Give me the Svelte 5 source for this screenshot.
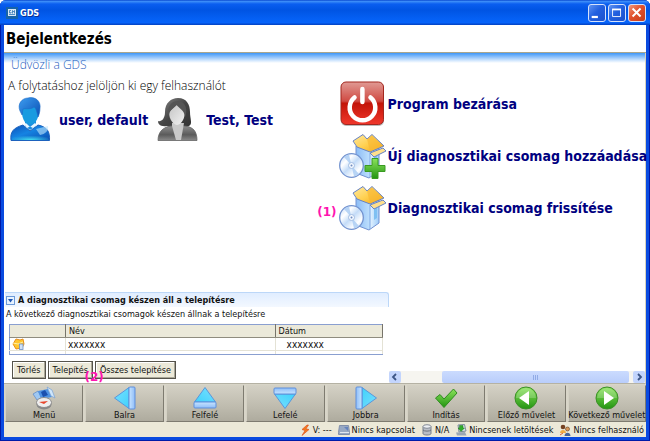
<script>
  const users = [
    { name: 'user, default', kind: 'man' },
    { name: 'Test, Test', kind: 'woman' },
  ];
  const actions = [
    { label: 'Program bezárása', kind: 'power' },
    { label: 'Új diagnosztikai csomag hozzáadása', kind: 'add' },
    { label: 'Diagnosztikai csomag frissítése', kind: 'update', mark: '(1)' },
  ];
  const tools = [
    { label: 'Menü', icon: 'menu' },
    { label: 'Balra', icon: 'arrow', turn: 0 },
    { label: 'Felfelé', icon: 'arrow', turn: 90 },
    { label: 'Lefelé', icon: 'arrow', turn: 270 },
    { label: 'Jobbra', icon: 'arrow', turn: 180 },
    { label: 'Indítás', icon: 'check' },
    { label: 'Előző művelet', icon: 'round', turn: 0 },
    { label: 'Következő művelet', icon: 'round', turn: 180 },
  ];
  const status = [
    { label: 'V: ---', icon: 'bolt' },
    { label: 'Nincs kapcsolat', icon: 'drive' },
    { label: 'N/A', icon: 'db' },
    { label: 'Nincsenek letöltések', icon: 'download' },
    { label: 'Nincs felhasználó', icon: 'people' },
  ];
</script>

<svg class="defs" aria-hidden="true">
  <defs>
    <linearGradient id="blueHair" x1="0" y1="0" x2="1" y2="1"><stop offset="0" stop-color="#3d9df0" /><stop offset="1" stop-color="#0a4fb4" /></linearGradient>
    <linearGradient id="blueBody" x1="0" y1="0" x2="1" y2="1"><stop offset="0" stop-color="#0d4fb8" /><stop offset=".45" stop-color="#1583e2" /><stop offset="1" stop-color="#0b4db0" /></linearGradient>
    <radialGradient id="cyanGlow" cx=".5" cy="1" r=".6"><stop offset="0" stop-color="#43dff0" /><stop offset="1" stop-color="#43dff0" stop-opacity="0" /></radialGradient>
    <linearGradient id="greyBody" x1="0" y1="0" x2="0" y2="1"><stop offset="0" stop-color="#8d8d8d" /><stop offset=".6" stop-color="#5b5b5b" /><stop offset="1" stop-color="#8a8a8a" /></linearGradient>
    <linearGradient id="greyHair" x1="0" y1="0" x2="1" y2="1"><stop offset="0" stop-color="#8a8a8a" /><stop offset=".5" stop-color="#454545" /><stop offset="1" stop-color="#333" /></linearGradient>
    <linearGradient id="face" x1="0" y1="0" x2="1" y2="1"><stop offset="0" stop-color="#c4c4c4" /><stop offset="1" stop-color="#f2f2f2" /></linearGradient>
    <linearGradient id="red" x1="0" y1="0" x2="0" y2="1"><stop offset="0" stop-color="#e09a94" /><stop offset=".45" stop-color="#d04a42" /><stop offset=".5" stop-color="#c31408" /><stop offset="1" stop-color="#f0382c" /></linearGradient>
    <linearGradient id="gold" x1="0" y1="0" x2="1" y2="1"><stop offset="0" stop-color="#ffe9a0" /><stop offset=".5" stop-color="#ffd050" /><stop offset="1" stop-color="#f3a412" /></linearGradient>
    <linearGradient id="box" x1="0" y1="0" x2="1" y2="0"><stop offset="0" stop-color="#8bbcf6" /><stop offset=".6" stop-color="#bfe0fd" /><stop offset=".61" stop-color="#e6f4ff" /><stop offset="1" stop-color="#9ccbf9" /></linearGradient>
    <linearGradient id="disc" x1="0" y1="0" x2="1" y2="1"><stop offset="0" stop-color="#b8d4f8" /><stop offset=".3" stop-color="#fff" /><stop offset=".5" stop-color="#c4dcf8" /><stop offset=".75" stop-color="#fff" /><stop offset="1" stop-color="#a9c8f2" /></linearGradient>
    <linearGradient id="green" x1="0" y1="0" x2="0" y2="1"><stop offset="0" stop-color="#8be35c" /><stop offset="1" stop-color="#239411" /></linearGradient>
    <linearGradient id="cyan" x1="0" y1="0" x2="1" y2="1"><stop offset="0" stop-color="#7adfff" /><stop offset="1" stop-color="#3fd2fb" /></linearGradient>
    <linearGradient id="bar" x1="0" y1="0" x2="1" y2="0"><stop offset="0" stop-color="#c7e4ff" /><stop offset="1" stop-color="#8fbdf8" /></linearGradient>
  </defs>
</svg>

{#snippet portrait(kind)}
  <svg class="portrait" viewBox="0 0 41 45" aria-hidden="true">
    {#if kind === 'man'}
      <path d="M1 43.500C0 35 3 31 13 28L20 34 28 28C37 30 40 34 39.500 43.500Z" fill="url(#blueBody)" stroke="#1d62bd" />
      <path d="M2 43C2 38 8 34 20 36 32 34 38 38 39 43Z" fill="url(#cyanGlow)" />
      <path d="M26 32L38 29C39 34 35 37 30 38Z" fill="#bfe6fb" opacity=".6" />
      <path d="M15 23V29L20 33 26 29V23Z" fill="#1c8de0" />
      <path d="M14 27L16 26 20 30 25 26 27 28 23 31 20 29.500 17 31Z" fill="#e7f7ff" />
      <path d="M12 10C11 20 14 27 20 27.500 26 27 30 20 29 10Z" fill="#189be0" />
      <path d="M10 14C7 7 12 1 18 1 26-1 31 5 30 11 30 15 29 18 28 20 27 15 26 11 24 10 20 13 15 11 13 12 12 15 13 17 12 18Z" fill="url(#blueHair)" stroke="#1d6cc8" stroke-width=".6" />
    {:else}
      <path d="M10 29C3 30 1 27 1 24 4 25 8 22 8 15 8 6 14 1 21 1 30 1 33 8 33 15 33 22 36 27 32 29 27 31 14 31 10 29Z" fill="url(#greyHair)" />
      <path d="M1 43.500C1 34 7 30 14 29H28C36 30 40 34 40 43.500Z" fill="url(#greyBody)" stroke="#666" stroke-width=".8" />
      <path d="M15 26H27L24 43H19L15 29Z" fill="#c9c9c9" />
      <path d="M12 15C12 23 17 28 20 28 25 27 28 21 28 14L21 7Z" fill="url(#face)" />
      <path d="M12 19C12 13 17 11 19 7 22 12 27 12 28 20 31 14 29 4 21 4 12 4 10 13 12 19Z" fill="#555" />
    {/if}
  </svg>
{/snippet}

{#snippet actionIcon(kind)}
  <svg class="big" viewBox="0 0 48 46" aria-hidden="true">
    {#if kind === 'power'}
      <rect x="2" y="2" width="43" height="43" rx="5" fill="#777" opacity=".5" />
      <rect x="2" y="1" width="42.500" height="42.500" rx="5" fill="url(#red)" stroke="#a3271f" />
      <path d="M15.500 16.500A12.800 12.800 0 1 0 31.500 16.500" fill="none" stroke="#fff" stroke-width="4.500" stroke-linecap="round" />
      <path d="M23.400 8V21" stroke="#fff" stroke-width="4.500" stroke-linecap="round" />
    {:else}
      <path d="M17 13L31 18 40 15V38L30 45 17 40Z" fill="url(#box)" stroke="#7292d2" />
      <path d="M31 20V44" stroke="#7da6e4" />
      <path d="M35 24L38 22V33L35 35Z" fill="#7fc0f2" />
      <path d="M14 8L24 1.500 28 6 33 1.500 45 13 31 19 18 14Z" fill="url(#gold)" stroke="#6783c4" />
      <path d="M28 6L31 18.500 43 12.500 33 2.500Z" fill="#f8b733" opacity=".65" />
      <path d="M31 20L44 15 47 18 35 24Z" fill="#ffdf8c" stroke="#6783c4" />
      <circle cx="12.500" cy="32.500" r="11.800" fill="url(#disc)" stroke="#7292cf" stroke-width="1.300" />
      <path d="M12.500 32.500L5 24A11 11 0 0 1 10 21.500ZM12.500 32.500L20 41A11 11 0 0 1 15 43.500Z" fill="#a8caf2" opacity=".8" />
      <circle cx="12.500" cy="32.500" r="3" fill="#f4f9ff" stroke="#a3bde2" />
      <circle cx="12.500" cy="32.500" r="1" fill="#6f8cc0" />
      {#if kind === 'add'}
        <path d="M33 25.500H39V32.500H46V38.500H39V45.500H33V38.500H26V32.500H33Z" fill="url(#green)" stroke="#3a9a22" />
      {/if}
    {/if}
  </svg>
{/snippet}

{#snippet toolIcon(t)}
  <svg class="tool-icon" viewBox="0 0 24 24" aria-hidden="true">
    {#if t.icon === 'menu'}
      <path d="M1 8L6 5 10 12 5 14Z" fill="#9fc8f2" stroke="#5b87c4" stroke-width=".7" />
      <path d="M6 5L16 3 20 11 9 13Z" fill="#4f92e2" />
      <path d="M9 6L13 4 16 9 11 11Z" fill="#1a4fae" />
      <path d="M15 1L20 4 23 12 19 10Z" fill="#cfe6fb" stroke="#7ba2d2" stroke-width=".7" />
      <ellipse cx="12" cy="18.500" rx="7.500" ry="5" fill="#888" />
      <ellipse cx="12" cy="16.500" rx="7.500" ry="5" fill="#eee" stroke="#8c8c8c" />
      <path d="M7 16L16 15 12 18Z" fill="#e8452c" />
    {:else if t.icon === 'arrow'}
      <g transform="rotate({t.turn} 12 12)">
        <path d="M1.500 12L16 1.500V22.500Z" fill="url(#cyan)" stroke="#5a96dc" stroke-linejoin="round" />
        <rect x="16" y="1" width="6" height="22" rx="1" fill="url(#bar)" stroke="#5f8fdb" />
      </g>
    {:else if t.icon === 'check'}
      <path d="M1.500 12L6 8.500 10 13 19.500 3 23 7 10 21.500Z" fill="url(#green)" stroke="#2f8d20" stroke-linejoin="round" />
    {:else}
      <circle cx="12" cy="12" r="11" fill="url(#green)" stroke="#3c8f28" />
      <path d="M2 12A10 10 0 0 1 22 12Z" fill="#fff" opacity=".2" />
      <path d="M5 12L15 5V19Z" fill="#fff" transform="rotate({t.turn} 12 12)" />
    {/if}
  </svg>
{/snippet}

{#snippet statusIcon(kind)}
  <svg class="status-icon" viewBox="0 0 12 12" aria-hidden="true">
    {#if kind === 'bolt'}
      <path d="M8 1L3 5.500 6 6.500 3 11.500 10 5.500 7 4.800 9.500 1Z" fill="#f47b1f" stroke="#d9481a" stroke-width=".6" />
    {:else if kind === 'drive'}
      <path d="M1.500 1.500H10.500L11.500 8.500V10.500H.5V8.500Z" fill="#98a9c4" stroke="#8290aa" />
      <path d="M2 8.500H11" stroke="#e0e6ef" /><path d="M6 3H10V7Z" fill="#6483bd" />
    {:else if kind === 'db'}
      <path d="M2 2.500V9.500C2 11.500 10 11.500 10 9.500V2.500Z" fill="#b9bec6" stroke="#777f8b" />
      <ellipse cx="6" cy="2.500" rx="4" ry="1.800" fill="#eceff3" stroke="#848b96" />
      <path d="M2 6C3 7.500 9 7.500 10 6" fill="none" stroke="#69717e" />
    {:else if kind === 'download'}
      <path d="M3 1L9.500 .5 11 7 4 8Z" fill="#dbe6ef" stroke="#7d8b99" />
      <path d="M1 8.500L10 8 11.500 11.500H2Z" fill="#9ba8b5" />
      <path d="M4.500 1.500H8V4H9.500L6 7.500 3 4H4.500Z" fill="#31ab2a" stroke="#217d1e" stroke-width=".5" />
    {:else}
      <circle cx="4" cy="3" r="2.300" fill="#754222" /><path d="M1 9C1 5 7 5 7 9Z" fill="#f1ad43" />
      <circle cx="8.500" cy="5" r="2" fill="#d99a5c" stroke="#5c3b20" stroke-width=".6" /><path d="M5.500 12C5.500 7.500 11.500 7.500 11.500 12Z" fill="#45659a" />
      <path d="M1 11L4 9" stroke="#dd622d" />
    {/if}
  </svg>
{/snippet}

<div class="window">
  <header class="titlebar">
    <svg class="logo" viewBox="0 0 12 12" aria-hidden="true">
      <rect width="12" height="12" fill="#1763a8" /><rect x="2" y="2" width="8" height="7" fill="#d9e8f5" />
      <path d="M5 3.500H3.500V6H5V5M6.500 6.500V3.500L7.500 5 8.500 3.500V6.500M3 7.500H9" fill="none" stroke="#2e73b2" stroke-width=".8" />
    </svg>
    <span class="caption">GDS</span>
    <button class="win" aria-label="Kis méret"><svg viewBox="0 0 18 18"><path d="M3 13.500H10" stroke="#fff" stroke-width="2.500" /></svg></button>
    <button class="win" aria-label="Teljes méret"><svg viewBox="0 0 18 18"><path d="M4 5H13V13H4Z" fill="none" stroke="#fff" /><path d="M3.500 5H13.500" stroke="#fff" stroke-width="2" /></svg></button>
    <button class="win close" aria-label="Bezárás"><svg viewBox="0 0 18 18"><path d="M4 4L13 13M13 4L4 13" stroke="#fff" stroke-width="2.200" /></svg></button>
  </header>

  <div class="client">
    <h1>Bejelentkezés</h1>
    <main>
      <section class="left">
        <h2>Üdvözli a GDS</h2>
        <p class="lead">A folytatáshoz jelöljön ki egy felhasználót</p>
        <div class="users">
          {#each users as u}
            <button class="user">{@render portrait(u.kind)}<span>{u.name}</span></button>
          {/each}
        </div>

        <section class="packages">
          <h3>
            <svg class="toggle" viewBox="0 0 9 9" aria-hidden="true"><rect x=".5" y=".5" width="8" height="8" fill="#e8f3ff" stroke="#6d9ad8" /><path d="M2 3H7L4.500 6.500Z" fill="#1c55b4" /></svg>
            A diagnosztikai csomag készen áll a telepítésre
          </h3>
          <p class="note">A következő diagnosztikai csomagok készen állnak a telepítésre</p>
          <table>
            <thead><tr><th class="c-icon"></th><th>Név</th><th class="c-date">Dátum</th></tr></thead>
            <tbody>
              <tr>
                <td class="c-icon"><svg class="pkg" viewBox="0 0 13 12" aria-hidden="true"><path d="M1 6L4 1 8 2 11 1 12 6 10 10 4 11Z" fill="#ffc62e" stroke="#e88f1d" /><path d="M1 5L6 6 11 4" stroke="#fff0a8" fill="none" /><rect x="7.500" y="6" width="3.500" height="5.500" fill="#cfe1f7" stroke="#6d90c4" stroke-width=".8" /></svg></td>
                <td>xxxxxxx</td><td class="date">xxxxxxx</td>
              </tr>
              <tr class="blank"><td></td><td></td><td></td></tr>
            </tbody>
          </table>
          <div class="buttons">
            <button>Törlés</button>
            <button class="marked">Telepítés<span class="mark">(2)</span></button>
            <button>Összes telepítése</button>
          </div>
        </section>
      </section>

      <section class="right">
        <div class="actions">
          {#each actions as a}
            <button class="action">
              {#if a.mark}<span class="mark">{a.mark}</span>{/if}
              {@render actionIcon(a.kind)}<span>{a.label}</span>
            </button>
          {/each}
        </div>
        <div class="scrollbar">
          <button aria-label="Görgetés balra"><svg viewBox="0 0 12 12"><path d="M7 3L4 6 7 9" fill="none" stroke="#3d5687" stroke-width="1.800" /></svg></button>
          <div class="track"><div class="thumb"><i></i><i></i><i></i></div></div>
          <button aria-label="Görgetés jobbra"><svg viewBox="0 0 12 12"><path d="M5 3L8 6 5 9" fill="none" stroke="#3d5687" stroke-width="1.800" /></svg></button>
        </div>
      </section>
    </main>

    <nav>
      {#each tools as t}
        <button>{@render toolIcon(t)}<span>{t.label}</span></button>
      {/each}
    </nav>
    <footer>
      {#each status as s}
        <span class="stat">{@render statusIcon(s.icon)}{s.label}</span>
      {/each}
    </footer>
  </div>
</div>

<style>
  :global(body) { margin: 0; background: #fff; }
  .defs { position: absolute; width: 0; height: 0; }
  .window {
    box-sizing: border-box;
    min-height: 100vh;
    display: flex;
    flex-direction: column;
    padding: 0 4px 4px 4px;
    border-radius: 6px 6px 0 0;
    background: #0a4be0;
    box-shadow: inset 1px -1px #0019a8, inset -1px 0 #0019a8;
    font-family: "DejaVu Sans Condensed", "Noto Sans", sans-serif;
    font-size: 9px;
    color: #111;
  }
  button { font: inherit; color: inherit; padding: 0; border: 0; background: none; cursor: pointer; }
  h1, h2, h3, p { margin: 0; }

  .titlebar {
    display: flex;
    align-items: center;
    gap: 2px;
    height: 25px;
    margin: 0 -4px;
    padding: 0 4px 0 6px;
    box-sizing: border-box;
    border-radius: 6px 6px 0 0;
    background: linear-gradient(#0a4ad0 0, #3a8bf8 6%, #0a5ef0 16%, #0054e3 40%, #0560f4 75%, #0663fa 90%, #0340c0 100%);
  }
  .logo { width: 12px; height: 12px; }
  .caption { flex: 1; color: #fff; font-weight: bold; text-shadow: 1px 1px #0a2f90; }
  .win {
    width: 18px;
    height: 18px;
    box-sizing: border-box;
    border: 1px solid #d5e2fb;
    border-radius: 3px;
    background: linear-gradient(135deg, #5f93f2, #2260e0 45%, #1b50cc);
  }
  .win svg { display: block; width: 16px; height: 16px; }
  .close { background: linear-gradient(135deg, #f0977a, #e1512c 45%, #c63d1a); }

  .client { flex: 1; display: flex; flex-direction: column; background: #fff; }
  h1 {
    height: 27px;
    padding-left: 2px;
    line-height: 28px;
    font-size: 15px;
    color: #000;
    border-bottom: 1px solid #aaa68c;
  }
  main {
    flex: 1;
    display: grid;
    grid-template-columns: 3fr 2fr;
    background: linear-gradient(#3f97f8, #c9e2fd 7px, #fff 10px);
    border-right: 1px solid #d8d2bd;
    border-bottom: 1px solid #b5b2a4;
  }
  .left { display: flex; flex-direction: column; }
  h2 { padding: 4px 0 0 7px; font: 300 12px/16px "Open Sans", "Noto Sans", sans-serif; color: #1f60c0; }
  .lead { padding: 4px 0 0 4px; font: 300 12px/18px "Open Sans", "Noto Sans", sans-serif; color: #000; white-space: nowrap; }
  .users { display: flex; gap: 9px; padding: 2px 0 0 6px; }
  .user { display: flex; align-items: center; gap: 8px; color: #000080; font-weight: bold; font-size: 14px; white-space: nowrap; }
  .portrait { width: 41px; height: 45px; }

  .packages { margin-top: auto; padding: 0 0 4px 1px; }
  h3 {
    display: flex;
    align-items: center;
    gap: 3px;
    height: 15px;
    box-sizing: border-box;
    padding-left: 1px;
    border: 1px solid #bcd7f8;
    border-width: 1px 1px 0 0;
    border-radius: 0 3px 0 0;
    background: linear-gradient(#e0edff, #f3f8ff);
    font-size: 9px;
    white-space: nowrap;
  }
  .toggle { width: 9px; height: 9px; }
  .note { padding: 1px 0 3px 1px; line-height: 13px; white-space: nowrap; }
  table { width: calc(100% - 10px); margin-left: 4px; border-collapse: collapse; table-layout: fixed; border: 1px solid #8a9fd0; }
  th { height: 12px; padding: 0 0 0 3px; background: #ebe9da; text-align: left; font-weight: normal; line-height: 12px; border-right: 1px solid #77746a; border-bottom: 1px solid #8f8c7f; }
  td { height: 11px; padding: 0 0 0 2px; font-size: 10px; line-height: 11px; border-right: 1px solid #e4e2d5; border-bottom: 1px solid #e4e2d5; }
  .c-icon { width: 52px; }
  .c-date { width: 103px; }
  td.date { padding-left: 11px; }
  .blank td { height: 3px; border-bottom-color: #8a9fd0; }
  .pkg { display: block; width: 13px; height: 12px; }
  .buttons { display: flex; gap: 2px; padding: 6px 0 0 7px; }
  .buttons button {
    position: relative;
    height: 18px;
    padding: 0 4px;
    border: 1px solid #55534b;
    background: #ece9d8;
    box-shadow: inset -1px -1px #aaa798, inset 1px 1px #fff;
    box-sizing: border-box;
    line-height: 14px;
    white-space: nowrap;
  }
  .mark { position: absolute; color: #ff14b0; font: bold 12px/14px "DejaVu Sans", sans-serif; }
  .buttons .marked { z-index: 1; }
  .marked .mark { left: 36px; top: 8px; }

  .right { display: flex; flex-direction: column; justify-content: space-between; min-width: 0; }
  .actions { display: flex; flex-direction: column; gap: 6px; margin: 28px 0 0 -50px; }
  .action { position: relative; display: flex; align-items: center; gap: 1px; color: #000080; font-weight: bold; font-size: 14px; white-space: nowrap; }
  .action .mark { right: 100%; top: 20px; margin-right: 2px; }
  .big { flex: none; width: 48px; height: 46px; }

  .scrollbar { display: flex; height: 12px; background: #f6f5f0; }
  .scrollbar button { width: 12px; height: 12px; border-radius: 2px; background: #c3d5fd; }
  .scrollbar svg { display: block; width: 12px; height: 12px; }
  .track { flex: 1; display: flex; justify-content: flex-end; padding-right: 4px; }
  .thumb { width: 82%; display: flex; align-items: center; justify-content: center; gap: 1px; border-radius: 2px; background: linear-gradient(#cbdbfe, #b9cdfb); }
  .thumb i { width: 1px; height: 5px; background: #91abe6; }

  nav { display: flex; gap: 2px; padding: 1px 0 0 1px; background: #d8d5c8; }
  nav button {
    flex: 1 1 0;
    min-width: 0;
    height: 37px;
    display: flex;
    flex-direction: column;
    align-items: center;
    border: 1px solid #aaa798;
    border-color: #d4d1c4 #7e7b70 #7e7b70 #d4d1c4;
    box-sizing: border-box;
    background: linear-gradient(#d3d0c4, #bebbae 60%, #aeab9e);
    line-height: 11px;
    white-space: nowrap;
  }
  .tool-icon { width: 24px; height: 24px; flex: none; }
  footer { display: flex; justify-content: flex-end; align-items: center; gap: 6px; height: 15px; padding-right: 2px; background: #ece9d8; white-space: nowrap; }
  .stat { display: flex; align-items: center; gap: 2px; }
  .status-icon { width: 12px; height: 12px; }
</style>
